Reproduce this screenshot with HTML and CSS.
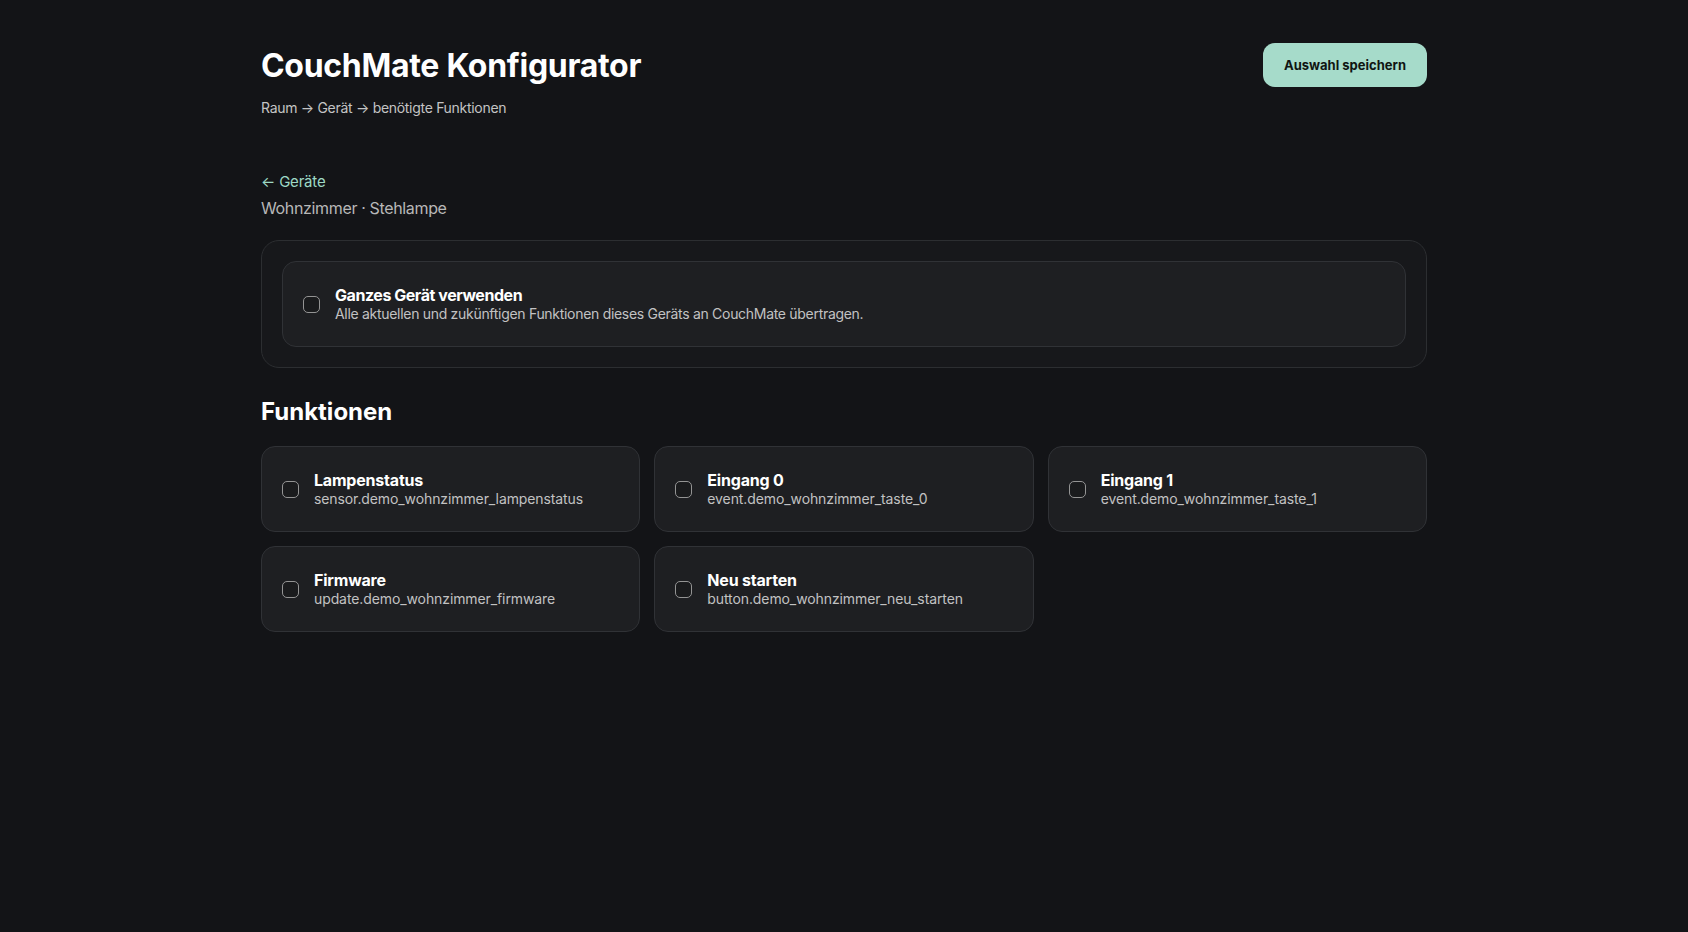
FILE: index.html
```html
<!DOCTYPE html>
<html lang="de">

<head>
  <title>CouchMate Konfigurator</title>
  <meta name="viewport" content="width=device-width, initial-scale=1">
  <link rel="stylesheet" href="styles.css">
</head>

<body>
  <div class="page">
    <div class="topbar">
      <div>
        <h1>CouchMate Konfigurator</h1>
        <p class="crumbs">Raum &rarr; Gerät &rarr; benötigte Funktionen</p>
      </div>
      <button class="save-btn">Auswahl speichern</button>
    </div>

    <a class="back" href="#">&larr; Geräte</a>
    <p class="device-path">Wohnzimmer &middot; Stehlampe</p>

    <div class="panel">
      <label class="option whole">
        <span class="box"></span>
        <span class="option-text">
          <span class="option-title">Ganzes Gerät verwenden</span>
          <span class="option-desc">Alle aktuellen und zukünftigen Funktionen dieses Geräts an CouchMate übertragen.</span>
        </span>
      </label>
    </div>

    <h2>Funktionen</h2>
    <div class="func-grid">
      <label class="option">
        <span class="box"></span>
        <span class="option-text">
          <span class="option-title">Lampenstatus</span>
          <span class="option-desc">sensor.demo_wohnzimmer_lampenstatus</span>
        </span>
      </label>
      <label class="option">
        <span class="box"></span>
        <span class="option-text">
          <span class="option-title">Eingang 0</span>
          <span class="option-desc">event.demo_wohnzimmer_taste_0</span>
        </span>
      </label>
      <label class="option">
        <span class="box"></span>
        <span class="option-text">
          <span class="option-title">Eingang 1</span>
          <span class="option-desc">event.demo_wohnzimmer_taste_1</span>
        </span>
      </label>
      <label class="option">
        <span class="box"></span>
        <span class="option-text">
          <span class="option-title">Firmware</span>
          <span class="option-desc">update.demo_wohnzimmer_firmware</span>
        </span>
      </label>
      <label class="option">
        <span class="box"></span>
        <span class="option-text">
          <span class="option-title">Neu starten</span>
          <span class="option-desc">button.demo_wohnzimmer_neu_starten</span>
        </span>
      </label>
    </div>
  </div>
</body>

</html>
```

FILE: styles.css
```css
html {
  font-family: Inter, "Noto Sans", sans-serif;
  background-color: #131417;
  color: #f2f2f2;
}

body {
  margin: 0;
}

.page {
  max-width: 1166px;
  margin: 0 auto;
  padding-top: 47px;
}

.topbar {
  display: flex;
  justify-content: space-between;
  align-items: flex-start;
}

h1 {
  margin: 0;
  font-size: 32px;
  line-height: 38px;
  font-weight: 700;
  letter-spacing: -0.3px;
  color: #ffffff;
}

.crumbs {
  margin: 13px 0 0;
  font-size: 14px;
  line-height: 20px;
  letter-spacing: -0.3px;
  color: #c4c4c4;
}

.save-btn {
  margin-top: -4px;
  padding: 0 21px;
  height: 44px;
  border: none;
  border-radius: 12px;
  background-color: #a6dbca;
  color: #101512;
  font-family: inherit;
  font-size: 13px;
  font-weight: 700;
}

.back {
  display: block;
  margin-top: 53px;
  font-size: 15px;
  line-height: 22px;
  letter-spacing: -0.2px;
  color: #9dd9c5;
  text-decoration: none;
}

.device-path {
  margin: 3px 0 0;
  font-size: 16px;
  line-height: 24px;
  letter-spacing: -0.35px;
  color: #b8b8b8;
}

.panel {
  margin-top: 20px;
  padding: 20px;
  border: 1px solid #2c2e31;
  border-radius: 18px;
  background-color: #17181b;
}

.option {
  display: flex;
  align-items: center;
  gap: 15px;
  padding: 23px 20px;
  border: 1px solid #303236;
  border-radius: 14px;
  background-color: #1e1f22;
}

.box {
  flex: none;
  width: 15px;
  height: 15px;
  border: 1.5px solid #949494;
  border-radius: 5px;
  background-color: #1a1b1d;
}

.option-text {
  display: flex;
  flex-direction: column;
}

.option-title {
  font-size: 16px;
  line-height: 20px;
  font-weight: 700;
  letter-spacing: -0.2px;
  color: #ffffff;
}

.option-desc {
  font-size: 14px;
  line-height: 18px;
  letter-spacing: -0.1px;
  color: #c2c2c2;
}

.whole .option-title {
  letter-spacing: -0.45px;
}

.whole .option-desc {
  letter-spacing: -0.3px;
}

h2 {
  margin: 29px 0 19px;
  font-size: 24px;
  line-height: 30px;
  font-weight: 700;
  color: #ffffff;
}

.func-grid {
  display: grid;
  grid-template-columns: repeat(3, 1fr);
  gap: 14px;
}
```
